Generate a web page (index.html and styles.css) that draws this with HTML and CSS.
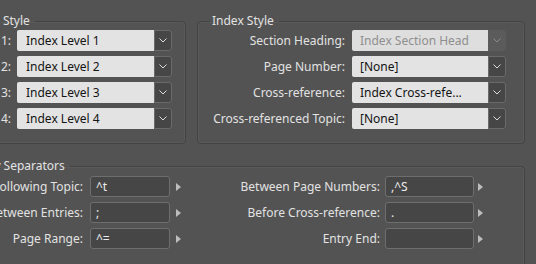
FILE: index.html
```html
<!DOCTYPE html>
<html lang="en">
<head>
<meta charset="utf-8">
<title>Index Options</title>
<link rel="stylesheet" href="styles.css">
</head>
<body>
<div class="dialog">
  <div class="top-row">
    <fieldset class="group group-level">
      <legend>Level Style</legend>
      <div class="rows">
        <div class="row"><span class="lbl">Level 1:</span><div class="select"><span class="value">Index Level 1</span><span class="btn"><svg width="8" height="5" viewBox="0 0 8 5"><path d="M0.5 0.5L4 4L7.5 0.5"/></svg></span></div></div>
        <div class="row"><span class="lbl">Level 2:</span><div class="select"><span class="value">Index Level 2</span><span class="btn"><svg width="8" height="5" viewBox="0 0 8 5"><path d="M0.5 0.5L4 4L7.5 0.5"/></svg></span></div></div>
        <div class="row"><span class="lbl">Level 3:</span><div class="select"><span class="value">Index Level 3</span><span class="btn"><svg width="8" height="5" viewBox="0 0 8 5"><path d="M0.5 0.5L4 4L7.5 0.5"/></svg></span></div></div>
        <div class="row"><span class="lbl">Level 4:</span><div class="select"><span class="value">Index Level 4</span><span class="btn"><svg width="8" height="5" viewBox="0 0 8 5"><path d="M0.5 0.5L4 4L7.5 0.5"/></svg></span></div></div>
      </div>
    </fieldset>
    <fieldset class="group group-index">
      <legend>Index Style</legend>
      <div class="rows">
        <div class="row"><span class="lbl">Section Heading:</span><div class="select disabled"><span class="value">Index Section Head</span><span class="btn"><svg width="8" height="5" viewBox="0 0 8 5"><path d="M0.5 0.5L4 4L7.5 0.5"/></svg></span></div></div>
        <div class="row"><span class="lbl">Page Number:</span><div class="select"><span class="value">[None]</span><span class="btn"><svg width="8" height="5" viewBox="0 0 8 5"><path d="M0.5 0.5L4 4L7.5 0.5"/></svg></span></div></div>
        <div class="row"><span class="lbl">Cross-reference:</span><div class="select"><span class="value">Index Cross-refe...</span><span class="btn"><svg width="8" height="5" viewBox="0 0 8 5"><path d="M0.5 0.5L4 4L7.5 0.5"/></svg></span></div></div>
        <div class="row"><span class="lbl">Cross-referenced Topic:</span><div class="select"><span class="value">[None]</span><span class="btn"><svg width="8" height="5" viewBox="0 0 8 5"><path d="M0.5 0.5L4 4L7.5 0.5"/></svg></span></div></div>
      </div>
    </fieldset>
  </div>
  <fieldset class="group group-sep">
    <legend>Entry Separators</legend>
    <div class="sep-cols">
      <div class="sep-col sep-left">
        <div class="pair"><span class="lbl">Following Topic:</span><span class="field">^t</span><span class="arrow"></span></div>
        <div class="pair"><span class="lbl">Between Entries:</span><span class="field">;</span><span class="arrow"></span></div>
        <div class="pair"><span class="lbl">Page Range:</span><span class="field">^=</span><span class="arrow"></span></div>
      </div>
      <div class="sep-col sep-right">
        <div class="pair"><span class="lbl">Between Page Numbers:</span><span class="field">,^S</span><span class="arrow"></span></div>
        <div class="pair"><span class="lbl">Before Cross-reference:</span><span class="field">.</span><span class="arrow"></span></div>
        <div class="pair"><span class="lbl">Entry End:</span><span class="field"></span><span class="arrow"></span></div>
      </div>
    </div>
  </fieldset>
</div>
</body>
</html>
```

FILE: styles.css
```css
html, body {
  margin: 0;
  padding: 0;
}

body {
  width: 536px;
  height: 264px;
  overflow: hidden;
  background: #535353;
  font-family: "Noto Sans", "DejaVu Sans", sans-serif;
  font-size: 12px;
  color: #e2e2e2;
}

.dialog {
  width: 569px;
  margin-left: -44px;
  padding-top: 13px;
  display: flex;
  flex-direction: column;
  gap: 14px;
}

.top-row {
  display: flex;
  gap: 11px;
}

.group {
  margin: 0;
  padding: 0;
  min-width: 0;
  border: 1px solid #434343;
  border-radius: 4px;
  box-shadow: inset 0 0 0 1px #5a5a5a;
}

.group legend {
  margin-left: 12px;
  padding: 0 5px 2px 2px;
  line-height: 15px;
  font-size: 12px;
  color: #e2e2e2;
}

.group-level {
  width: 230px;
  box-sizing: border-box;
  padding: 0 13px 14px 0;
}

.group-index {
  width: 328px;
  box-sizing: border-box;
  padding: 0 18px 14px 0;
}

.rows {
  display: flex;
  flex-direction: column;
  gap: 5px;
}

.row {
  display: flex;
  align-items: center;
  height: 21px;
}

.lbl {
  text-align: right;
  white-space: nowrap;
  line-height: 21px;
  flex: none;
}

.group-level .lbl {
  width: 54px;
  margin-right: 6px;
}

.group-index .lbl {
  width: 147px;
  margin-right: 7px;
}

.select {
  flex: 1;
  display: flex;
  height: 21px;
}

.select .value {
  flex: 1;
  background: #e3e3e3;
  color: #141414;
  line-height: 21px;
  padding-left: 9px;
  border-radius: 2px 0 0 2px;
  white-space: nowrap;
  overflow: hidden;
}

.group-index .select .value {
  padding-left: 8px;
}

.select .btn {
  flex: none;
  width: 18px;
  box-sizing: border-box;
  background: #464646;
  border: 1px solid #6a6a6a;
  border-radius: 0 3px 3px 0;
  display: flex;
  align-items: center;
  justify-content: center;
}

.select .btn svg {
  display: block;
}

.select .btn path {
  fill: none;
  stroke: #dcdcdc;
  stroke-width: 1;
}

.select.disabled .value {
  color: #8e8e8e;
  background: #dedede;
}

.select.disabled .btn {
  background: #5b5b5b;
  border-color: #5b5b5b;
}

.select.disabled .btn path {
  stroke: #8a8a8a;
}

.group-sep {
  width: 569px;
  box-sizing: border-box;
  height: 120px;
  padding: 1px 0 0 0;
}

.sep-cols {
  display: flex;
}

.sep-col {
  display: flex;
  flex-direction: column;
  gap: 5px;
}

.pair {
  display: flex;
  align-items: center;
  height: 21px;
}

.sep-left .lbl {
  width: 126px;
  margin-right: 7px;
}

.sep-left .field {
  width: 80px;
}

.sep-left .arrow {
  margin-left: 6px;
}

.sep-right .lbl {
  width: 199px;
  margin-right: 5px;
}

.sep-right .field {
  width: 89px;
}

.sep-right .arrow {
  margin-left: 4px;
}

.field {
  flex: none;
  box-sizing: border-box;
  height: 21px;
  background: #464646;
  border: 1px solid #6e6e6e;
  border-radius: 3px;
  color: #ececec;
  line-height: 19px;
  padding-left: 5px;
  white-space: nowrap;
}

.arrow {
  flex: none;
  width: 0;
  height: 0;
  border-top: 4px solid transparent;
  border-bottom: 4px solid transparent;
  border-left: 5px solid #bdbdbd;
}
```
